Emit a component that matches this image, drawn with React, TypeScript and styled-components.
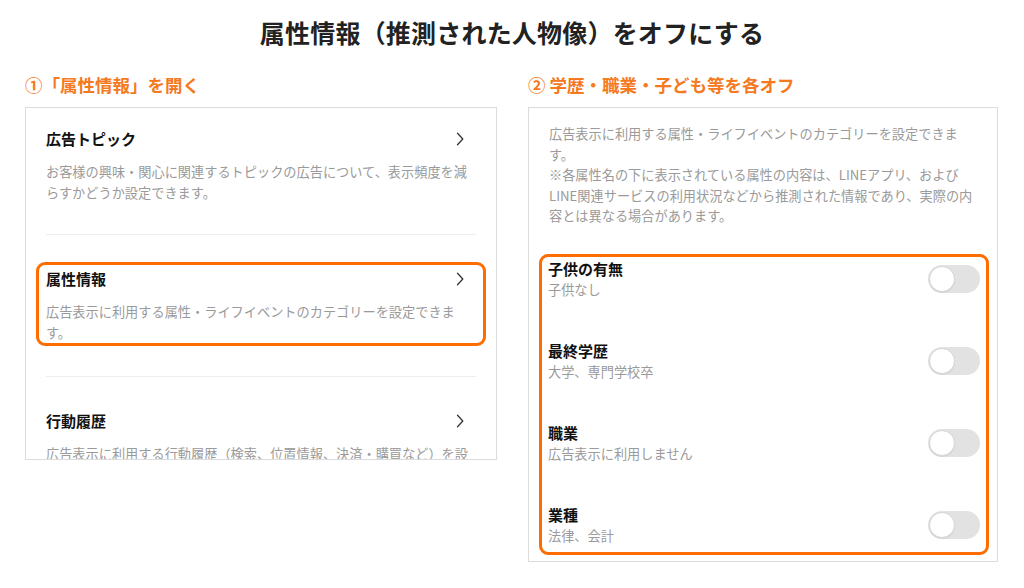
import React from 'react';
import styled, { createGlobalStyle } from 'styled-components';

const GlobalStyle = createGlobalStyle`
  html, body {
    margin: 0;
    padding: 0;
    background: #ffffff;
  }
  body {
    font-family: "Noto Sans CJK JP", "Noto Sans", sans-serif;
    color: #222;
  }
`;

const leftItems = [
  {
    title: '広告トピック',
    desc: 'お客様の興味・関心に関連するトピックの広告について、表示頻度を減らすかどうか設定できます。',
  },
  {
    title: '属性情報',
    desc: '広告表示に利用する属性・ライフイベントのカテゴリーを設定できます。',
    highlight: true,
  },
  {
    title: '行動履歴',
    desc: '広告表示に利用する行動履歴（検索、位置情報、決済・購買など）を設定できます。',
  },
];

const toggles = [
  { title: '子供の有無', value: '子供なし' },
  { title: '最終学歴', value: '大学、専門学校卒' },
  { title: '職業', value: '広告表示に利用しません' },
  { title: '業種', value: '法律、会計' },
];

const Chevron = () => (
  <svg width="8" height="14" viewBox="0 0 8 14" fill="none">
    <path d="M1.5 1.3L6.8 7L1.5 12.7" stroke="#333" strokeWidth="1.3" strokeLinecap="round" strokeLinejoin="round" />
  </svg>
);

const App = () => {
  return (
    <Page>
      <GlobalStyle />
      <Heading>属性情報（推測された人物像）をオフにする</Heading>
      <Columns>
        <Column>
          <StepLabel>①「属性情報」を開く</StepLabel>
          <MenuPanel>
            {leftItems.map((item, i) => (
              <React.Fragment key={item.title}>
                {i > 0 && <Divider />}
                <MenuItem $highlight={item.highlight}>
                  <MenuTitleRow>
                    <MenuTitle>{item.title}</MenuTitle>
                    <ChevronBox>
                      <Chevron />
                    </ChevronBox>
                  </MenuTitleRow>
                  <Desc>{item.desc}</Desc>
                </MenuItem>
              </React.Fragment>
            ))}
          </MenuPanel>
        </Column>
        <Column>
          <StepLabel>② 学歴・職業・子ども等を各オフ</StepLabel>
          <SettingsPanel>
            <Intro>
              広告表示に利用する属性・ライフイベントのカテゴリーを設定できます。
              <br />
              ※各属性名の下に表示されている属性の内容は、LINEアプリ、および
              <br />
              LINE関連サービスの利用状況などから推測された情報であり、実際の内容とは異なる場合があります。
            </Intro>
            <ToggleBox>
              {toggles.map((t) => (
                <ToggleRow key={t.title}>
                  <ToggleText>
                    <ToggleTitle>{t.title}</ToggleTitle>
                    <ToggleValue>{t.value}</ToggleValue>
                  </ToggleText>
                  <Switch>
                    <Knob />
                  </Switch>
                </ToggleRow>
              ))}
            </ToggleBox>
          </SettingsPanel>
        </Column>
      </Columns>
    </Page>
  );
};

export default App;

const orange = '#ff6c00';

const Page = styled.div`
  width: 1024px;
  height: 588px;
  box-sizing: border-box;
  padding-top: 15px;
  overflow: hidden;
`;

const Heading = styled.h1`
  margin: 0;
  text-align: center;
  font-size: 25px;
  line-height: 34px;
  font-weight: 700;
  color: #222;
  letter-spacing: 0.2px;
`;

const Columns = styled.div`
  display: grid;
  grid-template-columns: 472px 470px;
  column-gap: 31px;
  padding-left: 25px;
  margin-top: 24px;
  align-items: start;
`;

const Column = styled.div`
  display: flex;
  flex-direction: column;
`;

const StepLabel = styled.div`
  font-size: 17.5px;
  line-height: 24px;
  font-weight: 700;
  color: #f57a1f;
  margin-bottom: 10px;
  white-space: pre;
`;

const MenuPanel = styled.div`
  height: 353px;
  box-sizing: border-box;
  border: 1px solid #dcdcdc;
  padding: 0 20px;
  overflow: hidden;
`;

const MenuItem = styled.div<{ $highlight?: boolean }>`
  padding: 33px 0 31px;

  &:first-child {
    padding-top: 20px;
  }

  ${(p) =>
    p.$highlight &&
    `
    margin: 27px -10px 30px;
    padding: 3px 7px 0;
    border: 3px solid ${orange};
    border-radius: 9px;
  `}
`;

const MenuTitleRow = styled.div`
  display: flex;
  align-items: center;
  justify-content: space-between;
`;

const MenuTitle = styled.div`
  font-size: 15px;
  line-height: 22px;
  font-weight: 700;
  color: #111;
`;

const ChevronBox = styled.div`
  display: flex;
  align-items: center;
  padding-right: 12px;
`;

const Desc = styled.p`
  margin: 11px 0 0;
  font-size: 13.2px;
  line-height: 21px;
  color: #9a9a9a;
`;

const Divider = styled.div`
  height: 1px;
  background: #eeeeee;
`;

const SettingsPanel = styled.div`
  height: 455px;
  box-sizing: border-box;
  border: 1px solid #dcdcdc;
  padding: 16px 18px 0 20px;
  overflow: hidden;
`;

const Intro = styled.p`
  margin: 0;
  font-size: 13.2px;
  line-height: 20.6px;
  color: #9a9a9a;
`;

const ToggleBox = styled.div`
  margin: 27px -10px 0 -10px;
  padding: 1px 6px 6px;
  border: 3px solid ${orange};
  border-radius: 9px;
  display: flex;
  flex-direction: column;
  gap: 40px;
`;

const ToggleRow = styled.div`
  display: flex;
  align-items: center;
  justify-content: space-between;
`;

const ToggleText = styled.div`
  display: flex;
  flex-direction: column;
`;

const ToggleTitle = styled.div`
  font-size: 15px;
  line-height: 22px;
  font-weight: 700;
  color: #111;
`;

const ToggleValue = styled.div`
  font-size: 13.2px;
  line-height: 20px;
  color: #9a9a9a;
`;

const Switch = styled.div`
  width: 52px;
  height: 28px;
  box-sizing: border-box;
  border-radius: 14px;
  background: #e2e2e2;
  padding: 1px;
  display: flex;
  align-items: center;
`;

const Knob = styled.div`
  width: 26px;
  height: 26px;
  box-sizing: border-box;
  border-radius: 50%;
  background: #ffffff;
  border: 1px solid #d6d6d6;
  box-shadow: 0 1px 1px rgba(0, 0, 0, 0.06);
`;
